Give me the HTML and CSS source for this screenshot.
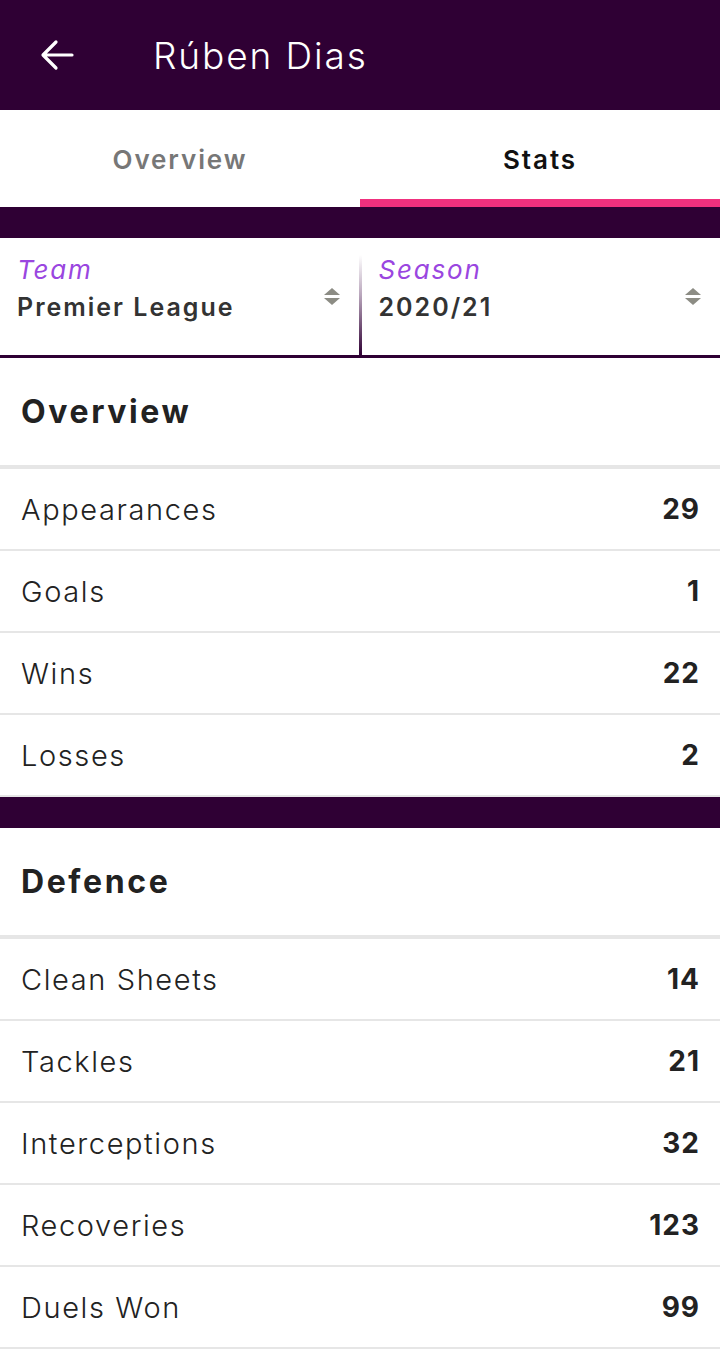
FILE: index.html
```html
<!DOCTYPE html>
<html lang="en">
<head>
  <meta charset="UTF-8" />
  <meta name="viewport" content="width=device-width, initial-scale=1" />
  <title>Rúben Dias - Stats</title>
  <link rel="stylesheet" href="styles.css">
</head>
<body>

  <!-- Top bar -->
  <header class="topbar">
    <svg class="back" width="34" height="32" viewBox="0 0 34 32">
      <path d="M32 16H4M16 3L3 16l13 13" fill="none" stroke="#fff" stroke-width="3.2" stroke-linecap="round" stroke-linejoin="round"/>
    </svg>
    <h1 class="title">Rúben Dias</h1>
  </header>

  <!-- Tabs -->
  <nav class="tabs">
    <div class="tab">Overview</div>
    <div class="tab active">Stats</div>
  </nav>
  <div class="band"></div>

  <!-- Filters -->
  <div class="filters">
    <div class="filter">
      <div>
        <div class="filter-label">Team</div>
        <div class="filter-value">Premier League</div>
      </div>
      <span class="sort"><i class="up"></i><i class="down"></i></span>
    </div>
    <div class="divider"></div>
    <div class="filter">
      <div>
        <div class="filter-label">Season</div>
        <div class="filter-value">2020/21</div>
      </div>
      <span class="sort"><i class="up"></i><i class="down"></i></span>
    </div>
  </div>

  <section class="group">
    <h2 class="group-title">Overview</h2>
    <div class="row"><span>Appearances</span><b>29</b></div>
    <div class="row"><span>Goals</span><b>1</b></div>
    <div class="row"><span>Wins</span><b>22</b></div>
    <div class="row"><span>Losses</span><b>2</b></div>
  </section>

  <div class="band"></div>

  <section class="group">
    <h2 class="group-title">Defence</h2>
    <div class="row"><span>Clean Sheets</span><b>14</b></div>
    <div class="row"><span>Tackles</span><b>21</b></div>
    <div class="row"><span>Interceptions</span><b>32</b></div>
    <div class="row"><span>Recoveries</span><b>123</b></div>
    <div class="row"><span>Duels Won</span><b>99</b></div>
  </section>

</body>
</html>
```

FILE: styles.css
```css
* {
  box-sizing: border-box;
}
html, body {
  margin: 0;
  background: #fff;
  font-family: Inter, "Noto Sans", sans-serif;
  color: #222;
}

/* Top bar */
.topbar {
  height: 110px;
  background: #2f0034;
  display: flex;
  align-items: center;
  padding-left: 40px;
}
.back {
  display: block;
}
.title {
  margin: 0 0 0 79px;
  color: #fff;
  font-weight: 300;
  font-size: 37px;
  letter-spacing: 1.9px;
}

/* Tabs */
.tabs {
  display: flex;
  height: 97px;
}
.tab {
  flex: 1;
  display: flex;
  align-items: center;
  justify-content: center;
  font-size: 26px;
  font-weight: 600;
  color: #777;
  letter-spacing: 1.9px;
  padding-top: 2px;
}
.tab.active {
  color: #111;
  border-bottom: 8px solid #f0307e;
  padding-top: 10px;
}

.band {
  height: 31px;
  background: #2f0034;
}

/* Filters */
.filters {
  display: flex;
  height: 120px;
  border-bottom: 3px solid #2f0034;
}
.filter {
  flex: 1;
  display: flex;
  justify-content: space-between;
  padding: 15px 19px 0 17px;
}
.filter-label {
  font-style: italic;
  color: #9a46e0;
  font-size: 26px;
  line-height: 34px;
  letter-spacing: 1.8px;
}
.filter-value {
  font-weight: 600;
  font-size: 25px;
  color: #333;
  line-height: 40px;
  letter-spacing: 2px;
}
.sort {
  display: flex;
  flex-direction: column;
  gap: 3px;
  margin-top: 35px;
}
.sort i {
  width: 0;
  height: 0;
  border-left: 8px solid transparent;
  border-right: 8px solid transparent;
}
.sort .up {
  border-bottom: 7px solid #8c8c84;
}
.sort .down {
  border-top: 7px solid #8c8c84;
}
.divider {
  width: 3px;
  margin-top: 17px;
  background: linear-gradient(#fff, #b9a6bc 40%, #2f0034);
}

/* Stat groups */
.group-title {
  margin: 0;
  height: 111px;
  display: flex;
  align-items: center;
  padding-left: 21px;
  font-size: 32px;
  font-weight: 700;
  color: #222;
  border-bottom: 4px solid #e6e6e6;
  letter-spacing: 2.6px;
}
.row {
  height: 82px;
  display: flex;
  align-items: center;
  justify-content: space-between;
  padding: 0 21px;
  border-bottom: 2px solid #e6e6e6;
  font-size: 29px;
}
.row span {
  font-weight: 300;
  color: #222;
  letter-spacing: 1.6px;
}
.row b {
  font-weight: 700;
  font-size: 28px;
  color: #222;
  letter-spacing: 1px;
  margin-right: -1px;
}
```
